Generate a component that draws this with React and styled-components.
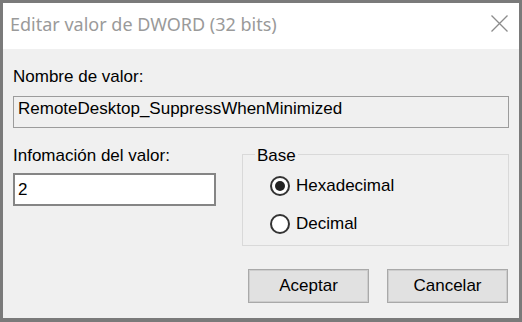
import React from 'react'
import styled, { createGlobalStyle } from 'styled-components'

const GlobalStyle = createGlobalStyle`
  html, body {
    margin: 0;
    padding: 0;
    background: #f0f0f0;
  }
  * {
    box-sizing: border-box;
  }
`

const Window = styled.div`
  width: 522px;
  height: 322px;
  border: 3px solid #7a7a7a;
  border-bottom-width: 4px;
  display: flex;
  flex-direction: column;
  font-family: "Liberation Sans", Arial, sans-serif;
  font-size: 17px;
  color: #000;
`

const TitleBar = styled.div`
  height: 46px;
  flex: none;
  background: #fff;
  display: flex;
  justify-content: space-between;
  align-items: flex-start;
  padding: 9px 11px 0 7px;
`

const Title = styled.span`
  font-family: "Noto Sans", "Open Sans", sans-serif;
  font-size: 18px;
  line-height: 24px;
  color: #9a9a9a;
`

const CloseIcon = styled.svg`
  margin-top: 3px;
  width: 17px;
  height: 17px;
`

const Body = styled.div`
  flex: 1;
  background: #f0f0f0;
  padding: 18px 10px 0 10px;
  display: flex;
  flex-direction: column;
`

const Label = styled.div`
  line-height: 20px;
`

const ReadOnlyBox = styled.div`
  margin-top: 9px;
  height: 32px;
  border: 1px solid #9c9c9c;
  background: #f0f0f0;
  padding: 2px 4px 0;
  line-height: 20px;
`

const LowerRow = styled.div`
  margin-top: 14px;
  display: flex;
  align-items: flex-start;
`

const LeftColumn = styled.div`
  width: 203px;
  padding-top: 4px;
  display: flex;
  flex-direction: column;
`

const ValueInput = styled.div`
  margin-top: 7px;
  height: 33px;
  border: 2px solid #858585;
  background: #fff;
  padding: 5px 3px 0;
  line-height: 20px;
`

const Group = styled.fieldset`
  flex: 1;
  min-width: 0;
  margin: 0 0 0 26px;
  padding: 10px 0 11px 0;
  border: 1px solid #d9d9d9;
`

const Legend = styled.legend`
  margin-left: 12px;
  padding: 4px 2px 0;
  line-height: 20px;
`

const RadioList = styled.div`
  padding-left: 27px;
  display: flex;
  flex-direction: column;
  gap: 18px;
`

const RadioRow = styled.label`
  display: flex;
  align-items: center;
  gap: 6px;
  height: 20px;
  line-height: 20px;
`

const RadioCircle = styled.span`
  width: 20px;
  height: 20px;
  border-radius: 50%;
  border: 2px solid #333;
  background: #fff;
  display: flex;
  align-items: center;
  justify-content: center;

  &::after {
    content: '';
    width: 10px;
    height: 10px;
    border-radius: 50%;
    background: #222;
    display: ${p => (p.checked ? 'block' : 'none')};
  }
`

const ButtonRow = styled.div`
  margin-top: 23px;
  margin-right: 1px;
  display: flex;
  justify-content: flex-end;
  gap: 18px;
`

const Button = styled.button`
  width: 121px;
  height: 34px;
  background: #e1e1e1;
  border: 1px solid #a9a9a9;
  box-shadow: inset 0 0 0 1px #cdcdcd;
  font-family: "Liberation Sans", Arial, sans-serif;
  font-size: 17px;
  color: #000;
  padding: 0;
`

export default function App() {
  return (
    <>
      <GlobalStyle />
      <Window>
        <TitleBar>
          <Title>Editar valor de DWORD (32 bits)</Title>
          <CloseIcon viewBox="0 0 17 17">
            <path d="M0.5 0.5 L16.5 16.5 M16.5 0.5 L0.5 16.5" stroke="#8c8c8c" strokeWidth="1.3" fill="none" />
          </CloseIcon>
        </TitleBar>
        <Body>
          <Label>Nombre de valor:</Label>
          <ReadOnlyBox>RemoteDesktop_SuppressWhenMinimized</ReadOnlyBox>
          <LowerRow>
            <LeftColumn>
              <Label>Infomación del valor:</Label>
              <ValueInput>2</ValueInput>
            </LeftColumn>
            <Group>
              <Legend>Base</Legend>
              <RadioList>
                <RadioRow>
                  <RadioCircle checked />
                  Hexadecimal
                </RadioRow>
                <RadioRow>
                  <RadioCircle />
                  Decimal
                </RadioRow>
              </RadioList>
            </Group>
          </LowerRow>
          <ButtonRow>
            <Button>Aceptar</Button>
            <Button>Cancelar</Button>
          </ButtonRow>
        </Body>
      </Window>
    </>
  )
}
